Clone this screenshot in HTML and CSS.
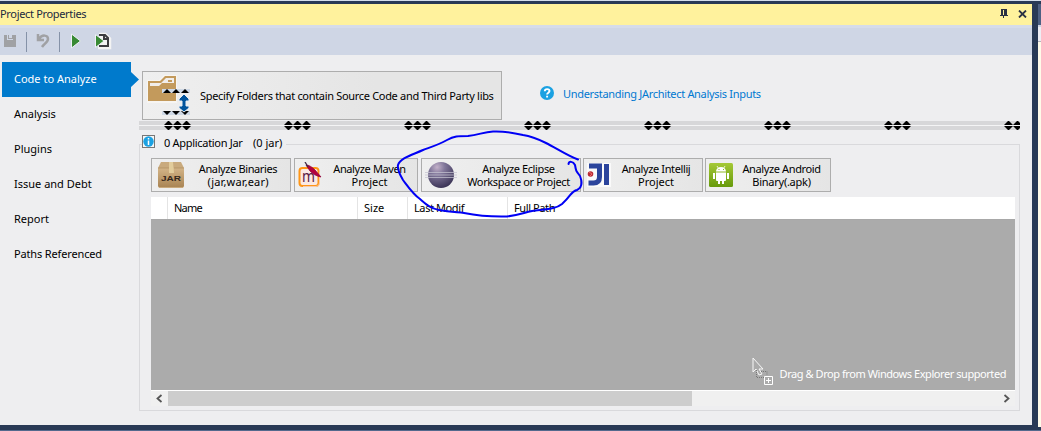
FILE: index.html
```html
<!DOCTYPE html>
<html lang="en">
<head>
<meta charset="utf-8">
<title>Project Properties</title>
<link rel="stylesheet" href="styles.css">
</head>
<body>
<div class="frame">
  <div class="window">
    <header class="titlebar">
      <span class="t title">Project Properties</span>
      <svg class="pin" width="8" height="9" shape-rendering="crispEdges"><path d="M1 0h6v6h1v1H4v2H3V7H0V6h1zM3 1v5h1V1z" fill="#2b3243" fill-rule="evenodd"/></svg>
      <svg class="close" width="9" height="8"><path d="M1 .5l7 7M8 .5l-7 7" stroke="#2b3243" stroke-width="1.8"/></svg>
    </header>
    <div class="toolbar">
      <svg width="120" height="27">
        <path d="M4 7h3v5h6V7h3v12H4z M8 7h1v3h3V7h1v4H8z" fill="#a0a1a4"/>
        <path d="M26.500 4v20M59.500 4v20" stroke="#8592a8"/>
        <path d="M38 6v6h6M39 11c3-5 9-4 9 0 0 3-4 5-6 8" fill="none" stroke="#a0a1a4" stroke-width="2.500"/>
        <path d="M71.500 6v14l9-7z" fill="#388a34" stroke="#eef1f6"/>
        <path d="M99 7h6l4 4v8H98" fill="none" stroke="#f3f3f3" stroke-width="4.500"/>
        <path d="M99 7h6l3 3v8H99M104 7v4h4" fill="#f3f3f3" stroke="#3c3c40" stroke-width="2"/>
        <path d="M95.500 6.500v13l8.500-6.500z" fill="#388a34" stroke="#eef1f6"/>
      </svg>
    </div>
    <div class="content">
      <nav class="sidebar">
        <a class="item active"><span class="t">Code to Analyze</span></a>
        <a class="item"><span class="t">Analysis</span></a>
        <a class="item"><span class="t">Plugins</span></a>
        <a class="item"><span class="t">Issue and Debt</span></a>
        <a class="item"><span class="t">Report</span></a>
        <a class="item"><span class="t refs">Paths Referenced</span></a>
      </nav>
      <main class="main">
        <div class="top">
          <button class="folders">
            <svg width="48" height="46">
              <path d="M4 8h12l5-5h13v28H4z" fill="#f7f5f2"/>
              <path d="M5 9h12l5-5h11v25H5z" fill="#c39a5c"/>
              <path d="M7 11h11l5-5h8v5H19l-3 3H7z" fill="#f1eeeb"/>
              <path d="M25 8h4v2h-4z" fill="#c39a5c"/>
              <path d="M19 17h28v4H19zM19 39h28v4H19z" fill="#cfd9e6"/>
              <path d="M20 21l4-4 4 4zm9 0l4-4 4 4zm9 0l4-4 4 4zM20 39h8l-4 4zm9 0h8l-4 4zm9 0h8l-4 4z" fill="#000"/>
              <path d="M41 22l5 5v2h-3v5h3v2l-5 4-5-4v-2h3v-5h-3v-2z" fill="#00539c" stroke="#e8edf4"/>
            </svg>
            <span class="t spec">Specify Folders that contain Source Code and Third Party libs</span>
          </button>
          <a class="help">
            <svg width="14" height="14"><circle cx="7" cy="7" r="7" fill="#1ba1e2"/><path d="M4.800 5.300c0-3 4.700-2.800 4.700-.2 0 1.600-2.400 1.600-2.400 3.500M7.100 9.700v1.800" fill="none" stroke="#fff" stroke-width="1.900"/></svg>
            <span class="t understand">Understanding JArchitect Analysis Inputs</span>
          </a>
        </div>
        <svg class="splitter" width="881" height="9">
          <defs><pattern id="grip" width="120" height="9" patternUnits="userSpaceOnUse" x="25">
            <path d="M0 4l4-4h1l4 4zm9 0l4-4h1l4 4zm9 0l4-4h1l4 4zM0 5h9L5 9H4zm9 0h9l-4 4h-1zm9 0h9l-4 4h-1z" fill="#000"/>
          </pattern></defs>
          <path d="M0 0h881v9H0z" fill="#d7d7d9"/><path d="M0 4h881v1H0z" fill="#f4f4f5"/>
          <path d="M0 0h881v9H0z" fill="url(#grip)"/>
        </svg>
        <section class="group">
          <div class="legend">
            <span class="infobox"><svg width="11" height="11"><circle cx="5.500" cy="5.500" r="5.200" fill="#1ba1e2"/><path d="M5.500 2v1.500M5.500 4.500V9" stroke="#fff" stroke-width="1.500"/></svg></span>
            <span class="t app">0 Application Jar</span><span class="t jars">(0 jar)</span>
          </div>
          <div class="buttons">
            <button class="action bin">
              <svg width="26" height="26">
                <defs><linearGradient id="box" x2="0" y2="1"><stop stop-color="#d3b487"/><stop offset="1" stop-color="#aa8555"/></linearGradient></defs>
                <path d="M3 0h20l3 6v18l-1 2H1l-1-2V6z" fill="#c9aa7d"/><path d="M0 6h26v18l-1 1H1l-1-1z" fill="url(#box)"/><path d="M11 0h4l1 11h-5z" fill="#e2cc9b"/><path d="M0 6h11m5 0h10" stroke="#a98859" stroke-width=".6"/>
                <text x="3" y="19" class="jar" textLength="20" lengthAdjust="spacingAndGlyphs">JAR</text>
              </svg>
              <span class="lines"><span class="t analyze">Analyze Binaries</span><span class="t ext">(jar,war,ear)</span></span>
            </button>
            <button class="action mvn">
              <svg width="26" height="26">
                <rect x="1.500" y="6" width="19" height="18" rx="3" fill="#fbe9e4" stroke="#ff9617" stroke-width="2"/>
                <path d="M5 24.500h13q3.500 0 3.500-3.500V10" fill="none" stroke="#f7c9ae"/><text x="4" y="20" class="em" textLength="13" lengthAdjust="spacingAndGlyphs">m</text>
                <path d="M8 3c3 0 6 2 9 5l6 7c-5-1-8-3-11-6z" fill="#b4003e" stroke="#8e0038" stroke-width=".8"/><path d="M7 0l3 5" stroke="#412b48" stroke-width="1.300"/>
              </svg>
              <span class="lines"><span class="t analyze">Analyze Maven</span><span class="t">Project</span></span>
            </button>
            <button class="action ecl">
              <svg width="32" height="28">
                <defs><radialGradient id="ball" cx=".35" cy=".2" r=".85"><stop stop-color="#c3b1c9"/><stop offset=".35" stop-color="#81779a"/><stop offset="1" stop-color="#373052"/></radialGradient></defs>
                <circle cx="16" cy="14" r="13" fill="url(#ball)"/><path d="M0 11.500h32M0 14h32M0 16.500h32" stroke="#c4c2d0" stroke-width="1.200" opacity=".75"/>
              </svg>
              <span class="lines"><span class="t analyze">Analyze Eclipse</span><span class="t workspace">Workspace or Project</span></span>
            </button>
            <button class="action idea">
              <svg width="24" height="24"><path d="M0 0h24v24H0z" fill="#fafafa"/><path d="M2 3h10.500V14q0 6-6 6H1.500M19.500 1v21" fill="none" stroke="#2b449c" stroke-width="5"/><circle cx="3.500" cy="11" r="2.800" fill="#b92b35"/><path d="M2 9l3 2-2 2" fill="none" stroke="#ed6b69"/></svg>
              <span class="lines"><span class="t analyze">Analyze Intellij</span><span class="t">Project</span></span>
            </button>
            <button class="action apk">
              <svg width="24" height="24"><defs><linearGradient id="green" x2="0" y2="1"><stop stop-color="#a5c936"/><stop offset="1" stop-color="#679a0c"/></linearGradient></defs><rect width="24" height="24" rx="1.500" fill="url(#green)"/><path d="M7 8.500a5 4.500 0 0 1 10 0zM7 9.500h10V17q0 1-1 1h-1v3h-2v-3h-2v3H9v-3H8q-1 0-1-1zM4 10h2v6H4zM18 10h2v6h-2z" fill="#fff"/><path d="M8 3l1.500 2.500M16 3l-1.500 2.500" stroke="#fff" stroke-width=".8"/><path d="M9.500 6h1v1h-1zM14 6h1v1h-1z" fill="#8bb625"/></svg>
              <span class="lines"><span class="t analyze">Analyze Android</span><span class="t binary">Binary(.apk)</span></span>
            </button>
          </div>
          <div class="table">
            <div class="head"><span class="col c0"></span><span class="col c1"><span class="t name">Name</span></span><span class="col c2"><span class="t">Size</span></span><span class="col c3"><span class="t modif">Last Modif</span></span><span class="col c4"><span class="t path">Full Path</span></span></div>
            <div class="drop">
              <svg width="22" height="28"><path d="M1 1v14l3-3 3 6 3-1-3-5h4z" fill="#ababab" stroke="#f7f7f7"/><path d="M4.500 13v7.500H12M9 14.500h6V18" fill="none" stroke="#777" stroke-dasharray="1 1"/><path d="M12.500 19.500h8v8h-8zM14 23.500h5M16.500 21v5" fill="none" stroke="#fff"/></svg>
              <span class="t drag">Drag &amp; Drop from Windows Explorer supported</span>
            </div>
            <div class="scroll">
              <svg class="arrow" width="17" height="15"><path d="M10.500 4L6.500 7.500l4 3.500" fill="none" stroke="#555" stroke-width="1.800"/></svg>
              <span class="thumb"></span>
              <svg class="arrow" width="17" height="15"><path d="M6.500 4l4 3.500-4 3.500" fill="none" stroke="#555" stroke-width="1.800"/></svg>
            </div>
          </div>
        </section>
      </main>
    </div>
  </div>
  <aside class="edge"><span class="e1"></span><span class="e2"></span><span class="e3"></span></aside>
</div>
<svg class="ink" width="1041" height="431"><path d="M578 159.500C568 156 556 148 546 143C536 138 530 136 523 135C510 132 502 131 493 131.500C483 132 479 135 468 136C458 136 454 136 447 140C438 145 431 147 423 150C412 155 400 158 398 165C397 170 400 175 403 180C409 188 413 194 420 199C427 205 430 208 439 210C449 212 454 212 464 213C479 216 488 217 507 216.500C519 215 523 213 532 211C547 209 556 209 562 204C572 195 571 191 577 190C583 187 582 181 580 176C576 171 576 171 575 165C573 161 569 161 568.500 164"/></svg>
</body>
</html>
```
FILE: styles.css
```css
* { box-sizing: border-box; }
body { margin: 0; width: 1041px; height: 431px; overflow: hidden; background: #293a56; font: 11px/12px "Noto Sans", "Open Sans", sans-serif; color: #000; }
button { font: inherit; color: inherit; border: 2px solid #adadad; background: #e9e9e9; padding: 0; margin: 0; display: flex; align-items: center; }
svg { display: block; flex: none; }
.t { display: block; white-space: nowrap; }
.frame { height: 431px; display: flex; border-top: 1px solid #d5dfec; border-bottom: 1px solid #53698d; }
.window { width: 1032px; padding-top: 3px; flex: none; }
.titlebar { height: 21px; background: #fff29d; display: flex; align-items: center; color: #1b293e; }
.title { width: 1000px; margin-top: -1px; letter-spacing: -.33px; }
.pin { margin-top: -3px; }
.close { margin: -2px 0 0 10px; }
.toolbar { height: 30px; background: #cfd6e5; border-top: 3px solid #d6dce9; }
.content { height: 370px; background: #eeeef0; display: flex; }
.sidebar { width: 139px; padding: 7px 0 0 2px; flex: none; }
.item { height: 35px; width: 129px; padding: 0 0 2px 12px; display: flex; align-items: center; }
.refs { letter-spacing: -.15px; }
.active { background: #007acc; color: #fff; width: 137px; clip-path: polygon(0 0, 129px 0, 129px 10px, 137px 17.5px, 129px 25px, 129px 35px, 0 35px); }
.main { width: 881px; padding-top: 16px; }
.top { height: 50px; display: flex; padding-left: 3px; }
.folders { width: 360px; height: 49px; border-width: 1px; background: linear-gradient(90deg, #efefef, #e5e5e5 65%); }
.folders svg { margin-top: -1px; }
.spec { margin: 1px 0 0 9px; letter-spacing: -.315px; }
.help { display: flex; align-items: flex-start; padding: 15px 0 0 38px; color: #0078d0; }
.understand { margin: 2px 0 0 9px; letter-spacing: -.31px; }
.group { margin-top: 14px; width: 881px; height: 267px; border: 1px solid #d9d9dc; padding: 0 4px 4px 11px; }
.legend { height: 13px; width: 144px; margin: -10px 0 10px -9px; display: flex; background: #eeeef0; }
.infobox { width: 13px; height: 13px; border: 1px solid #777; background: #f7f7f7; flex: none; }
.app { width: 80px; margin: 2px 0 0 9px; letter-spacing: -.3px; }
.jars { margin: 2px 0 0 9px; }
.buttons { display: flex; height: 34px; }
.action { height: 34px; flex: none; border-width: 1px; background: linear-gradient(90deg, #efefef, #e5e5e5); }
.lines { flex: 1; display: flex; flex-direction: column; align-items: center; gap: 1px; }
.analyze { letter-spacing: -.38px; }
.workspace { letter-spacing: -.35px; }
.ext { letter-spacing: .15px; }
.binary { letter-spacing: -.25px; }
.bin { width: 140px; padding-left: 6px; margin-right: 3px; }
.bin .lines { padding-left: 2px; }
.mvn { width: 124px; padding-left: 3px; margin-right: 3px; }
.mvn .lines { padding-right: 2px; }
.ecl { width: 160px; padding-left: 3px; margin-right: 2px; }
.idea { width: 120px; padding-left: 3px; margin-right: 2px; }
.idea .lines { padding-right: 1px; }
.apk { width: 126px; padding-left: 3px; }
.jar { font: bold 8px "Liberation Sans", sans-serif; fill: #35271b; }
.em { font: 17px "Noto Sans", sans-serif; fill: #5c2145; }
.table { margin-top: 5px; width: 864px; }
.head { height: 23px; background: #fff; border-bottom: 1px solid #a8a8a8; display: flex; align-items: stretch; }
.col { border-right: 1px solid #e4e4e4; display: flex; align-items: center; padding-left: 6px; }
.name { letter-spacing: -.8px; }
.modif, .path { letter-spacing: -.4px; }
.c0 { width: 17px; }
.c1 { width: 190px; }
.c2 { width: 50px; }
.c3 { width: 100px; }
.c4 { border: 0; }
.drop { height: 171px; background: #ababab; border-bottom: 1px solid #fff; color: #fff; display: flex; justify-content: flex-end; align-items: flex-end; padding: 0 9px 5px 0; }
.drag { margin: 0 0 5px 6px; letter-spacing: -.44px; }
.scroll { height: 15px; background: #f0f0f0; display: flex; justify-content: space-between; }
.thumb { width: 524px; background: #cdcdcd; margin-right: 306px; }
.edge { width: 9px; padding: 3px 0 3px 6px; display: flex; flex-direction: column; }
.e1 { height: 21px; background: #4d6082; }
.e2 { height: 17px; background: #eeeef4; border-top: 2px solid #cfd6e5; border-bottom: 1px solid #b5b5bb; }
.e3 { flex: 1; background: #fffbe9; }
.ink { position: absolute; left: 0; top: 0; }
.ink path { fill: none; stroke: #0000f5; stroke-width: 2; stroke-linecap: round; stroke-linejoin: round; }
```
